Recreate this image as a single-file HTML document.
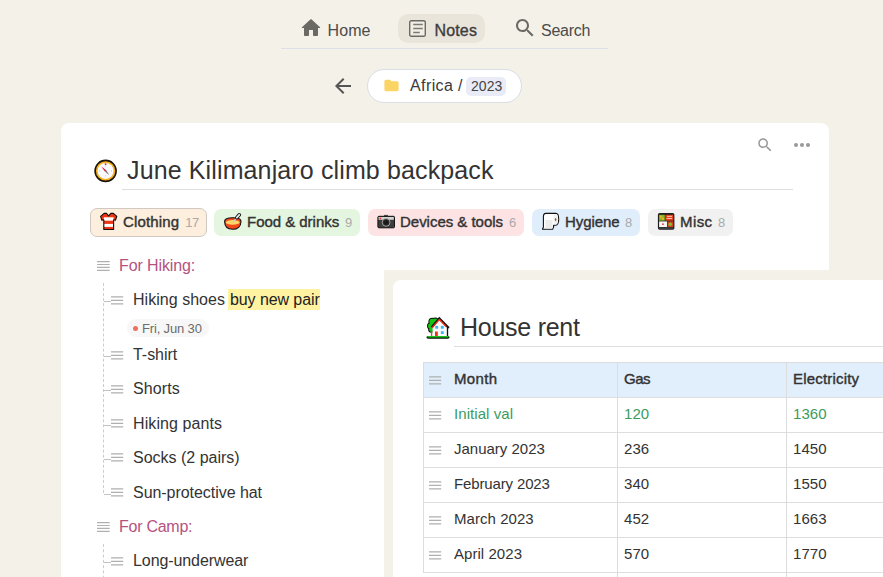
<!DOCTYPE html>
<html lang="en"><head>
<meta charset="utf-8">
<title>June Kilimanjaro climb backpack</title>
<style>
*{box-sizing:border-box;margin:0;padding:0}
html,body{width:883px;height:577px;overflow:hidden}
body{background:#f4f1e8;font-family:"Liberation Sans",sans-serif;color:#333;position:relative}
.abs,.t{position:absolute}
.t{white-space:nowrap;line-height:20px;height:20px}
svg{position:absolute;display:block;overflow:visible}

/* top navigation */
.nav .t{font-size:16px;color:#4b4b4b}
.nav .pill{position:absolute;left:398px;top:14px;width:87px;height:29px;border-radius:10px;background:#e9e5da}
.nav .rule{position:absolute;left:281px;top:48px;width:327px;height:1px;background:#dcdfe6}

/* breadcrumb */
.crumb{position:absolute;left:367px;top:69px;width:155px;height:34px;border-radius:17px;background:#fff;border:1px solid #d9dde6}
.crumb .chip{position:absolute;left:98px;top:7px;width:40px;height:19px;border-radius:5px;background:#e9ecf7}

/* cards */
.card{position:absolute;background:#fff;border-radius:8px}
#card1{left:61px;top:123px;width:768px;height:470px}
#shade{position:absolute;left:384px;top:270px;width:520px;height:320px;background:#f4f1e8}
#card2{left:393px;top:280px;width:520px;height:320px}

.title{font-weight:normal;font-size:25px;color:#333;line-height:30px;height:30px}
.m{font-weight:normal;-webkit-text-stroke:.4px currentColor}
.uline{position:absolute;height:1px;background:#dedede}

/* tabs */
.tab{position:absolute;top:209px;height:27px;border-radius:7px}
.tab .t{font-size:15px;color:#333;top:3px;-webkit-text-stroke:.4px currentColor}
.tab .t.n{font-size:13px;color:#aaa;-webkit-text-stroke:0;top:4px}

/* outline list */
.row .t{font-size:16px;color:#333}
.sec .t{color:#b5537f}
.h4{left:96.600px}
.h3{left:111px}
.h3 path,.h4 path{stroke:#b0b0b0;fill:none}
.conn{position:absolute;left:104px;width:7px;height:1px;background:#c2c2c2}
.vdash{position:absolute;left:103px;width:0;border-left:1px dashed #ccc}
.hl{position:absolute;background:#fff3a1}
.date{position:absolute;left:127px;top:319px;width:82px;height:18px;border-radius:9px;background:#f7f7f7}
.date b{position:absolute;left:6px;top:7px;width:5px;height:5px;border-radius:50%;background:#f0705f}
.date .t{left:15px;top:0;font-size:13px;color:#6c6c6c}

/* table */
.tbl{position:absolute;left:423px;top:362px;width:470px;height:211px;border-left:1px solid #dcdcdc;border-top:1px solid #dcdcdc}
.tr{position:absolute;left:0;width:470px;height:35px;border-bottom:1px solid #dedede}
.tr.head{background:#e1eefb}
.tr .t{font-size:15px;color:#333;top:6px}
.tr.head .t{-webkit-text-stroke:.4px currentColor}
.tr.green .t{color:#3b9b5e}
.vl{position:absolute;top:0;width:1px;height:216px;background:#dcdcdc}
.tr .h3{left:4.900px;top:12.600px}
.c1{left:30px}.c2{left:200px}.c3{left:369px}
</style>
</head>
<body>

<nav class="nav">
  <div class="pill"></div>
  <svg style="left:299px;top:15.5px" width="24" height="24" viewBox="0 0 24 24"><path fill="#6b6964" d="M10 19v-5h4v5c0 .55.45 1 1 1h3c.55 0 1-.45 1-1v-7h1.7c.46 0 .68-.57.33-.87L12.670 3.600c-.38-.34-.96-.34-1.34 0l-8.360 7.530c-.34.300-.13.870.330.870H5v7c0 .55.45 1 1 1h3c.55 0 1-.45 1-1z"></path></svg>
  <span class="t" style="left: 327.5px; top: 21px; letter-spacing: 0.094px;">Home</span>
  <svg style="left:409px;top:19.5px" width="17" height="17" viewBox="0 0 17 17"><rect x=".7" y=".7" width="15.6" height="15.6" rx="1.6" fill="#f1eee6" stroke="#6b6964" stroke-width="1.4"></rect><path d="M4.200 4.500h9.600M4.200 8.500h9.600M4.200 12.500h6.600" stroke="#7d7a74" stroke-width="1.700" fill="none"></path></svg>
  <span class="t" style="left: 434.5px; top: 21px; color: rgb(60, 60, 60); -webkit-text-stroke: 0.35px currentcolor; letter-spacing: 0.153px;">Notes</span>
  <svg style="left:513px;top:16px" width="24" height="24" viewBox="0 0 24 24"><path fill="#6b6964" d="M15.5 14h-.79l-.28-.27C15.410 12.590 16 11.110 16 9.500 16 5.910 13.090 3 9.500 3S3 5.910 3 9.500 5.910 16 9.500 16c1.610 0 3.090-.59 4.230-1.570l.270.280v.790l5 4.990L20.490 19l-4.990-5zm-6 0C7.010 14 5 11.990 5 9.500S7.010 5 9.500 5 14 7.010 14 9.500 11.990 14 9.500 14z"></path></svg>
  <span class="t" style="left: 541px; top: 21px; letter-spacing: -0.258px;">Search</span>
  <div class="rule"></div>
</nav>

<header>
  <svg style="left:331px;top:74px" width="24" height="24" viewBox="0 0 24 24"><path fill="#555" d="M20 11H7.830l5.590-5.590L12 4l-8 8 8 8 1.410-1.410L7.830 13H20v-2z"></path></svg>
  <div class="crumb">
    <svg style="left:14.500px;top:7.300px" width="17" height="17" viewBox="0 0 24 24"><path fill="#fbd466" d="M10 4H4c-1.100 0-1.990.900-1.990 2L2 18c0 1.100.900 2 2 2h16c1.100 0 2-.9 2-2V8c0-1.100-.9-2-2-2h-8l-2-2z"></path></svg>
    <span class="t" style="left: 42px; top: 6px; font-size: 16px; color: rgb(58, 58, 58); letter-spacing: 0.396px;">Africa /</span>
    <div class="chip"><span class="t" style="left: 5px; top: -1px; font-size: 14px; color: rgb(68, 68, 68); letter-spacing: 0.082px;">2023</span></div>
  </div>
</header>

<main>
<section id="note1">
  <div class="card" id="card1"></div>
  <svg style="left:755.5px;top:135.5px" width="18" height="18" viewBox="0 0 24 24"><path fill="#999" d="M15.5 14h-.79l-.28-.27C15.410 12.590 16 11.110 16 9.500 16 5.910 13.090 3 9.500 3S3 5.910 3 9.500 5.910 16 9.500 16c1.610 0 3.090-.59 4.230-1.570l.270.280v.790l5 4.990L20.490 19l-4.990-5zm-6 0C7.010 14 5 11.990 5 9.500S7.010 5 9.500 5 14 7.010 14 9.500 11.990 14 9.500 14z"></path></svg>
  <svg style="left:790px;top:133px" width="24" height="24" viewBox="0 0 24 24"><g fill="#999"><circle cx="6" cy="12" r="2"></circle><circle cx="12" cy="12" r="2"></circle><circle cx="18" cy="12" r="2"></circle></g></svg>

  <svg class="emoji" style="left:93px;top:158px" width="26" height="26" viewBox="93 158 26 26"><circle cx="105.6" cy="170.9" r="10.5" fill="#f5b120" stroke="#1a1307" stroke-width="1.6"/><circle cx="105.6" cy="170.9" r="8" fill="#fbfbfd"/><circle cx="105.6" cy="164.2" r=".9" fill="#e8222c"/><path d="M105.600 165.500v1M105.600 175.300v1M99.200 170.900h1M111 170.900h1" stroke="#9fb0c8" stroke-width=".7"/><path d="M101.200 166.600L106.300 170.200 104.900 171.600z" fill="#d81f2c"/><path d="M109.300 175.200L104.900 171.600 106.300 170.200z" fill="#777"/></svg>
  <h1 class="t title" style="left: 127px; top: 155px; letter-spacing: 0.126px;">June Kilimanjaro climb backpack</h1>
  <div class="uline" style="left:122px;top:189px;width:671px"></div>

  <div class="tabs">
    <div class="tab" style="left:90px;top:208px;width:117px;height:29px;background:#fdeedd;border:1px solid #cfc9c2">
      <svg class="emoji" style="left:9px;top:3px" width="18" height="19" viewBox="-.2 -.9 18 19"><defs><clipPath id="shirtclip"><path d="M3.900.5H6.300L8.450 2.900 10.600.5H13.200L16.600 3.400 15.200 7.400 13.400 6.900V16.600H3.600V6.900L1.700 7.400.4 3.400z"/></clipPath></defs><g clip-path="url(#shirtclip)"><rect x="0" y="0" width="17" height="17" fill="#ee3414"/><rect x="3.600" y="4.400" width="9.800" height="3.400" fill="#fff"/><rect x="3.600" y="11" width="9.800" height="3" fill="#fff"/><path d="M6.300.5L8.450 2.900 10.600.5" fill="#fff"/></g><path d="M3.900.5H6.300L8.450 2.900 10.600.5H13.200L16.600 3.400 15.200 7.400 13.400 6.900V16.600H3.600V6.900L1.700 7.400.4 3.400z" fill="none" stroke="#111" stroke-width="1.1" stroke-linejoin="round"/></svg>
      <span class="t" style="left: 32px; top: 3px; letter-spacing: 0.137px;">Clothing</span><span class="t n" style="left: 94.2px; top: 4px; letter-spacing: -0.3px;">17</span>
    </div>
    <div class="tab" style="left:214px;width:146px;background:#e4f6e0">
      <svg class="emoji" style="left:9px;top:3px" width="20" height="19" viewBox="223 212 20 19"><path d="M224.600 221.300C224.600 216.500 241 216.500 241 221.300 241 226.500 237.500 229.300 232.800 229.300 228 229.300 224.600 226.500 224.600 221.300z" fill="#f2481c" stroke="#111" stroke-width="1.100"/><ellipse cx="232.700" cy="222.400" rx="6.800" ry="2.300" fill="#fdd467"/><path d="M233.200 221.700L237 217.500" stroke="#c9ced6" stroke-width="1.200" stroke-linecap="round"/><path d="M236.800 217.600L239.300 214.800" stroke="#111" stroke-width="3.600" stroke-linecap="round"/><path d="M236.800 217.600L239.300 214.800" stroke="#e9ebf0" stroke-width="1.800" stroke-linecap="round"/></svg>
      <span class="t" style="left: 33px; letter-spacing: -0.032px;">Food &amp; drinks</span><span class="t n" style="left: 131px; letter-spacing: 0.078px;">9</span>
    </div>
    <div class="tab" style="left:368px;width:156px;background:#fde3e3">
      <svg class="emoji" style="left:9px;top:5px" width="19" height="15" viewBox="377 214 19 15"><rect x="384" y="214.900" width="4" height="1.600" fill="#555"/><rect x="377.900" y="216.300" width="16.600" height="11.500" rx="1" fill="#3c3c3c" stroke="#111" stroke-width="1"/><rect x="378.600" y="217" width="15.200" height="2.800" fill="#d2d2d2"/><circle cx="380.400" cy="218.400" r=".9" fill="#f0392b"/><circle cx="386.100" cy="222.400" r="3.900" fill="#2a2a2a" stroke="#cfcfcf" stroke-width=".7"/><circle cx="386.100" cy="222.400" r="2.200" fill="#1a1a1a"/></svg>
      <span class="t" style="left: 32px; letter-spacing: -0.022px;">Devices &amp; tools</span><span class="t n" style="left: 141px; letter-spacing: 0.078px;">6</span>
    </div>
    <div class="tab" style="left:532px;width:108px;background:#e0edfb">
      <svg class="emoji" style="left:9px;top:3px" width="19" height="19" viewBox="541 212 19 19"><path d="M545.800 213.400H555.800A2.900 5.900 0 0 1 555.800 225.200H553.600V227L552.600 229.300H542.500L543.400 227V217Q543.400 213.400 545.800 213.400z" fill="#fff" stroke="#111" stroke-width="1.100" stroke-linejoin="round"/><rect x="545.500" y="220" width="7" height="8.500" fill="#ececec"/><ellipse cx="555.800" cy="219.300" rx="2.300" ry="5.200" fill="#f1f1f1"/><ellipse cx="555.600" cy="219.600" rx=".8" ry="1.600" fill="#9a5a2a"/></svg>
      <span class="t" style="left: 33px; letter-spacing: -0.058px;">Hygiene</span><span class="t n" style="left: 93px; letter-spacing: 0.078px;">8</span>
    </div>
    <div class="tab" style="left:648px;width:85px;background:#f1f1f1">
      <svg class="emoji" style="left:9px;top:3px" width="19" height="19" viewBox="657 212 19 19"><rect x="657.900" y="213" width="16.500" height="16.700" rx="1.800" fill="#1e1e1e"/><rect x="659.100" y="214.800" width="5.700" height="5.900" fill="#8cb52a"/><circle cx="660.800" cy="216.800" r="1.100" fill="#f5b416"/><circle cx="663" cy="218.700" r="1.100" fill="#f5b416"/><rect x="665.300" y="214.800" width="8" height="5.900" fill="#e3411c"/><path d="M667 216.400h5M666.500 218.500h5.500" stroke="#f6e3d6" stroke-width=".8"/><rect x="659.100" y="221.400" width="7.900" height="5.600" fill="#f4f4f4"/><circle cx="663" cy="224.200" r=".9" fill="#e8392b"/><rect x="667.500" y="221.400" width="5.800" height="5.600" fill="#d5401c"/><circle cx="670.300" cy="224.200" r="1.800" fill="#7dc12e"/><rect x="659.100" y="227.400" width="14.200" height="1.300" fill="#4a4a4a"/></svg>
      <span class="t" style="left: 32px; letter-spacing: 0.418px;">Misc</span><span class="t n" style="left: 70px; letter-spacing: 0.078px;">8</span>
    </div>
  </div>

  <div class="list">
    <div class="row sec"><svg class="h4" style="top:261px" width="12.700" height="10" viewBox="0 0 12.700 10"><path stroke-width="1.200" d="M0 .6h12.700M0 3.500h12.700M0 6.400h12.700M0 9.300h12.700"/></svg><span class="t" style="left: 119px; top: 256px; letter-spacing: -0.105px;">For Hiking:</span></div>
    <div class="vdash" style="top:283px;height:210px"></div>

    <div class="row"><i class="conn" style="top:301px"></i><svg class="h3" style="top:295.5px" width="12.200" height="9" viewBox="0 0 12.200 9"><path stroke-width="1.400" d="M0 .9h12.200M0 4.400h12.200M0 7.900h12.200"/></svg><div class="hl" style="left:228px;top:289px;width:92px;height:21px"></div><span class="t" style="left: 133px; top: 290px; letter-spacing: 0.035px;">Hiking shoes</span><span class="t" style="left: 230px; top: 290px; color: rgb(34, 34, 34); letter-spacing: -0.089px;">buy new pair</span>
      <div class="date"><b></b><span class="t" style="letter-spacing: -0.153px;">Fri, Jun 30</span></div></div>
    <div class="row"><i class="conn" style="top:356px"></i><svg class="h3" style="top:350.6px" width="12.200" height="9" viewBox="0 0 12.200 9"><path stroke-width="1.400" d="M0 .9h12.200M0 4.400h12.200M0 7.900h12.200"/></svg><span class="t" style="left: 133px; top: 345px; letter-spacing: -0.04px;">T-shirt</span></div>
    <div class="row"><i class="conn" style="top:390px"></i><svg class="h3" style="top:384.5px" width="12.200" height="9" viewBox="0 0 12.200 9"><path stroke-width="1.400" d="M0 .9h12.200M0 4.400h12.200M0 7.900h12.200"/></svg><span class="t" style="left: 133px; top: 379px; letter-spacing: 0.083px;">Shorts</span></div>
    <div class="row"><i class="conn" style="top:425px"></i><svg class="h3" style="top:419.2px" width="12.200" height="9" viewBox="0 0 12.200 9"><path stroke-width="1.400" d="M0 .9h12.200M0 4.400h12.200M0 7.900h12.200"/></svg><span class="t" style="left: 133px; top: 414px; letter-spacing: 0.089px;">Hiking pants</span></div>
    <div class="row"><i class="conn" style="top:459px"></i><svg class="h3" style="top:453.4px" width="12.200" height="9" viewBox="0 0 12.200 9"><path stroke-width="1.400" d="M0 .9h12.200M0 4.400h12.200M0 7.900h12.200"/></svg><span class="t" style="left: 133px; top: 448px; letter-spacing: -0.006px;">Socks (2 pairs)</span></div>
    <div class="row"><i class="conn" style="top:494px"></i><svg class="h3" style="top:488.1px" width="12.200" height="9" viewBox="0 0 12.200 9"><path stroke-width="1.400" d="M0 .9h12.200M0 4.400h12.200M0 7.900h12.200"/></svg><span class="t" style="left: 133px; top: 483px; letter-spacing: -0.046px;">Sun-protective hat</span></div>

    <div class="row sec"><svg class="h4" style="top:522px" width="12.700" height="10" viewBox="0 0 12.700 10"><path stroke-width="1.200" d="M0 .6h12.700M0 3.500h12.700M0 6.400h12.700M0 9.300h12.700"/></svg><span class="t" style="left: 119px; top: 517px; letter-spacing: -0.264px;">For Camp:</span></div>
    <div class="vdash" style="top:544px;height:40px"></div>
    <div class="row"><i class="conn" style="top:562px"></i><svg class="h3" style="top:556.6px" width="12.200" height="9" viewBox="0 0 12.200 9"><path stroke-width="1.400" d="M0 .9h12.200M0 4.400h12.200M0 7.900h12.200"/></svg><span class="t" style="left: 133px; top: 551px; letter-spacing: -0.085px;">Long-underwear</span></div>
  </div>
</section>

<div id="shade"></div>

<section id="note2">
  <div class="card" id="card2"></div>
  <svg class="emoji" style="left:425px;top:316px" width="26" height="24" viewBox="425 316 26 24"><g fill="#111"><circle cx="432.400" cy="321.800" r="4"/><circle cx="430.700" cy="326" r="3.700"/><circle cx="435.300" cy="321" r="3.500"/><circle cx="431.500" cy="329.600" r="3.300"/></g><g fill="#14c414"><circle cx="432.400" cy="321.800" r="3"/><circle cx="430.700" cy="326" r="2.700"/><circle cx="435.300" cy="321" r="2.500"/><circle cx="431.500" cy="329.600" r="2.300"/><circle cx="434" cy="325" r="3"/></g><rect x="430.900" y="331.500" width="1.500" height="4.500" fill="#b5651d"/><path d="M432.600 327.200L439.300 319.400 446.800 327.200V337H432.600z" fill="#fafafa"/><path d="M447.500 327V337" stroke="#111" stroke-width="1.300"/><path d="M431.700 327.300L439.300 318.300 448.800 328" fill="none" stroke="#111" stroke-width="2.200"/><path d="M432 327.900L439.300 319.500 446.300 326.700" fill="none" stroke="#f0341a" stroke-width="1.300"/><g fill="#35b8f5"><rect x="435.300" y="325.900" width="2.800" height="2.800"/><rect x="440.900" y="325.900" width="2.800" height="2.800"/><rect x="440.900" y="331.200" width="2.800" height="2.800"/></g><rect x="435" y="331.500" width="2.800" height="5.500" fill="#f0341a"/><path d="M428 337.300H448" stroke="#111" stroke-width="2.800" stroke-linecap="round"/><path d="M428 336.700H448" stroke="#15c415" stroke-width="1.600" stroke-linecap="round"/></svg>
  <h1 class="t title" style="left: 460px; top: 312px; letter-spacing: -0.26px;">House rent</h1>
  <div class="uline" style="left:454px;top:346px;width:440px"></div>

  <div class="tbl">
    <div class="tr head" style="top:0"><svg class="h3" width="12.200" height="9" viewBox="0 0 12.200 9"><path stroke-width="1.400" d="M0 .9h12.200M0 4.400h12.200M0 7.900h12.200"/></svg><span class="t c1" style="letter-spacing: 0.322px;">Month</span><span class="t c2" style="letter-spacing: -0.495px;">Gas</span><span class="t c3" style="letter-spacing: 0.19px;">Electricity</span></div>
    <div class="tr green" style="top:35px"><svg class="h3" width="12.200" height="9" viewBox="0 0 12.200 9"><path stroke-width="1.400" d="M0 .9h12.200M0 4.400h12.200M0 7.900h12.200"/></svg><span class="t c1" style="letter-spacing: 0.064px;">Initial val</span><span class="t c2" style="letter-spacing: 0.089px;">120</span><span class="t c3" style="letter-spacing: 0.09px;">1360</span></div>
    <div class="tr" style="top:70px"><svg class="h3" width="12.200" height="9" viewBox="0 0 12.200 9"><path stroke-width="1.400" d="M0 .9h12.200M0 4.400h12.200M0 7.900h12.200"/></svg><span class="t c1" style="letter-spacing: 0px;">January 2023</span><span class="t c2" style="letter-spacing: 0.089px;">236</span><span class="t c3" style="letter-spacing: 0.09px;">1450</span></div>
    <div class="tr" style="top:105px"><svg class="h3" width="12.200" height="9" viewBox="0 0 12.200 9"><path stroke-width="1.400" d="M0 .9h12.200M0 4.400h12.200M0 7.900h12.200"/></svg><span class="t c1" style="letter-spacing: -0.137px;">February 2023</span><span class="t c2" style="letter-spacing: 0.089px;">340</span><span class="t c3" style="letter-spacing: 0.09px;">1550</span></div>
    <div class="tr" style="top:140px"><svg class="h3" width="12.200" height="9" viewBox="0 0 12.200 9"><path stroke-width="1.400" d="M0 .9h12.200M0 4.400h12.200M0 7.900h12.200"/></svg><span class="t c1" style="letter-spacing: 0.055px;">March 2023</span><span class="t c2" style="letter-spacing: 0.089px;">452</span><span class="t c3" style="letter-spacing: 0.09px;">1663</span></div>
    <div class="tr" style="top:175px"><svg class="h3" width="12.200" height="9" viewBox="0 0 12.200 9"><path stroke-width="1.400" d="M0 .9h12.200M0 4.400h12.200M0 7.900h12.200"/></svg><span class="t c1" style="letter-spacing: 0.048px;">April 2023</span><span class="t c2" style="letter-spacing: 0.089px;">570</span><span class="t c3" style="letter-spacing: 0.09px;">1770</span></div>
    <div class="vl" style="left:193px"></div><div class="vl" style="left:362px"></div>
  </div>
</section>
</main>



</body></html>
